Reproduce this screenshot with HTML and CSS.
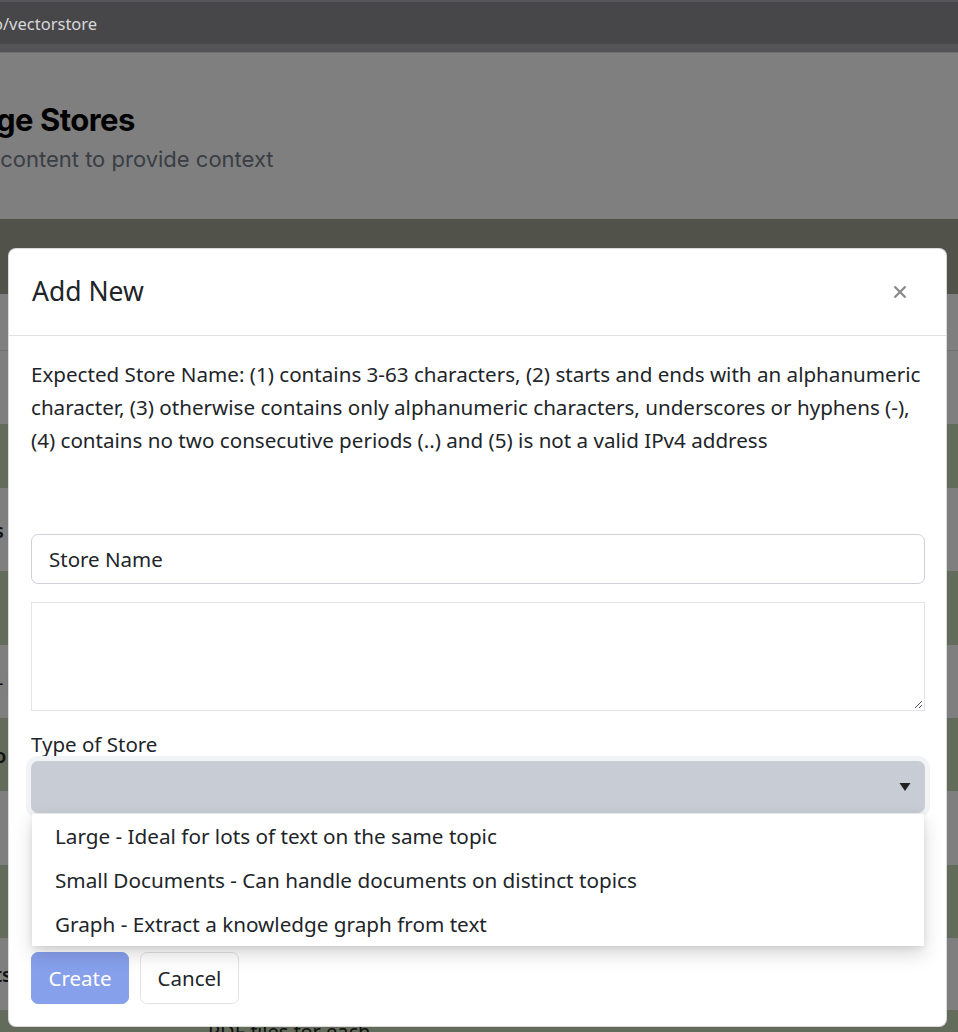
FILE: index.html
```html
<!DOCTYPE html>
<html lang="en">
<head>
<meta charset="utf-8">
<title>Knowledge Stores</title>
<link rel="stylesheet" href="styles.css">
</head>
<body>
<div class="chrome">
  <div class="chrome-top"></div>
  <div class="urlbar"><span class="url">o/vectorstore</span></div>
  <div class="chrome-bottom"></div>
</div>
<div class="page">
  <header class="hero">
    <h1 class="hero-title">ge Stores</h1>
    <p class="hero-sub">&nbsp;content to provide context</p>
  </header>
  <div class="tabs"></div>
  <div class="table">
    <div class="row white h56"></div>
    <div class="row white h74 divider"></div>
    <div class="row green h64"></div>
    <div class="row white h83"><span class="peek">s</span></div>
    <div class="row green h74"></div>
    <div class="row white h73"><span class="peek peek-dash">-|</span></div>
    <div class="row green h73"><span class="peek">o</span></div>
    <div class="row white h74"></div>
    <div class="row green h73"></div>
    <div class="row white h72"><span class="peek">ts</span></div>
    <div class="row green h40"><span class="peek-mid">PDF files for each</span></div>
  </div>
  <div class="backdrop"></div>

  <div class="modal">
    <div class="modal-header">
      <h5 class="modal-title">Add New</h5>
      <button class="close" type="button" aria-label="Close">
        <svg width="16" height="16" viewBox="0 0 16 16"><path d="M2.5 2.5 L13.5 13.5 M13.5 2.5 L2.5 13.5" stroke="#8c8c8c" stroke-width="2.4" stroke-linecap="butt"/></svg>
      </button>
    </div>
    <div class="modal-body">
      <p class="rules">Expected Store Name: (1) contains 3-63 characters, (2) starts and ends with an alphanumeric character, (3) otherwise contains only alphanumeric characters, underscores or hyphens (-), (4) contains no two consecutive periods (..) and (5) is not a valid IPv4 address</p>
      <div class="field-name">Store Name</div>
      <div class="field-desc">
        <svg class="grip" width="10" height="10" viewBox="0 0 10 10"><path d="M9 2 L2 9 M9 6 L6 9" stroke="#555" stroke-width="1"/></svg>
      </div>
      <label class="label">Type of Store</label>
      <div class="select-wrap">
        <div class="select">
          <svg class="caret" width="12" height="10" viewBox="0 0 12 10"><path d="M0.5 1 L11.5 1 L6 9 Z" fill="#222"/></svg>
        </div>
        <ul class="options">
          <li>Large - Ideal for lots of text on the same topic</li>
          <li>Small Documents - Can handle documents on distinct topics</li>
          <li>Graph - Extract a knowledge graph from text</li>
        </ul>
      </div>
      <div class="actions">
        <button class="btn btn-primary" type="button">Create</button>
        <button class="btn btn-light" type="button">Cancel</button>
      </div>
    </div>
  </div>
</div>
</body>
</html>
```
FILE: styles.css
```css
* { box-sizing: border-box; }
html, body { margin: 0; padding: 0; }
body {
  width: 958px;
  height: 1032px;
  overflow: hidden;
  font-family: "Noto Sans", "Open Sans", sans-serif;
  color: #212529;
  background: #fff;
}

/* browser chrome */
.chrome { height: 53px; display: flex; flex-direction: column; }
.chrome-top { height: 2px; background: #56565a; }
.urlbar {
  height: 42px;
  background: #474749;
  display: flex;
  align-items: center;
}
.url {
  font-family: "Noto Sans", sans-serif;
  font-size: 16.5px;
  color: #d8d8da;
  margin-left: -7px;
}
.chrome-bottom { height: 9px; background: #545456; border-bottom: 1px solid #6c6c6e; }

/* page behind the modal */
.page { position: relative; height: 979px; }
.hero {
  height: 166px;
  background: #fff;
  padding-top: 47px;
}
.hero-title {
  margin: 0;
  font-family: Inter, "Noto Sans", sans-serif;
  font-weight: 700;
  font-size: 31px;
  line-height: 40px;
  letter-spacing: -0.5px;
  color: #000;
  margin-left: -4px;
}
.hero-sub {
  margin: 0;
  font-family: Inter, "Noto Sans", sans-serif;
  font-size: 22px;
  line-height: 38px;
  color: #737d8b;
  margin-left: -6px;
}
.tabs { height: 75px; background: #a3a592; }
.table { display: flex; flex-direction: column; }
.row { position: relative; }
.white { background: #fff; }
.green { background: #c6d6b4; }
.divider { border-top: 1px solid #e3e3e3; }
.h40 { height: 40px; }
.h56 { height: 56px; }
.h64 { height: 64px; }
.h72 { height: 72px; }
.h73 { height: 73px; }
.h74 { height: 74px; }
.h83 { height: 83px; }
.peek {
  position: absolute;
  left: -6px;
  top: 50%;
  transform: translateY(-50%);
  font-family: "Noto Sans", sans-serif;
  font-weight: 600;
  font-size: 20px;
  color: #222;
}
.peek-dash { left: -3px; font-weight: 400; }
.peek-mid {
  position: absolute;
  left: 208px;
  top: 8px;
  font-size: 20px;
  color: #222;
}
.backdrop {
  position: absolute;
  inset: 0;
  background: rgba(0, 0, 0, 0.5);
}

/* modal */
.modal {
  position: absolute;
  left: 8px;
  top: 195px;
  width: 939px;
  height: 779px;
  background: #fff;
  border: 1px solid rgba(0,0,0,0.15);
  border-radius: 8px;
  display: flex;
  flex-direction: column;
}
.modal-header {
  height: 87px;
  flex: none;
  display: flex;
  align-items: center;
  justify-content: space-between;
  padding: 0 38px 0 23px;
  border-bottom: 1px solid #dee2e6;
}
.modal-title {
  margin: 0;
  font-size: 26.5px;
  font-weight: 400;
  line-height: 1.2;
  color: #212529;
}
.close {
  border: 0;
  background: transparent;
  padding: 0;
  width: 16px;
  height: 16px;
  display: flex;
}
.modal-body {
  padding: 22px 21px 0 22px;
  font-size: 20.5px;
  line-height: 33px;
}
.rules { margin: 0; font-size: 20.6px; }
.field-name {
  margin-top: 77px;
  height: 50px;
  border: 1px solid #cfd1d8;
  border-radius: 7px;
  padding-left: 17px;
  display: flex;
  align-items: center;
  color: #212529;
  font-size: 20.5px;
}
.field-desc {
  position: relative;
  margin-top: 18px;
  height: 109px;
  border: 1px solid #e3e4e9;
}
.grip { position: absolute; right: 1px; bottom: 1px; }
.label {
  display: block;
  margin-top: 17px;
  line-height: 33px;
  height: 33px;
}
.select-wrap { position: relative; }
.select {
  position: relative;
  height: 52px;
  background: #c8ccd4;
  border-radius: 7px;
  box-shadow: 0 0 0 5px #f2f3f6;
}
.caret { position: absolute; right: 14px; top: 21px; }
.options {
  position: absolute;
  left: 1px;
  right: 1px;
  top: 53px;
  margin: 0;
  padding: 0;
  list-style: none;
  background: #fff;
  height: 132px;
  box-shadow: 0 8px 18px rgba(0,0,0,0.16), 0 2px 6px rgba(0,0,0,0.08);
  z-index: 2;
}
.options li {
  height: 44px;
  line-height: 44px;
  padding-left: 23px;
  font-size: 20.7px;
  color: #212529;
}
.actions {
  display: flex;
  gap: 11px;
  margin-top: 139px;
}
.btn {
  height: 52px;
  border-radius: 7px;
  font-family: "Noto Sans", sans-serif;
  font-size: 20.5px;
  padding: 0 15px;
}
.btn-primary {
  width: 98px;
  background: #87a0ec;
  border: 1px solid #87a0ec;
  color: #fff;
}
.btn-light {
  width: 99px;
  background: #fff;
  border: 1px solid #e2e3e7;
  color: #212529;
}
```
